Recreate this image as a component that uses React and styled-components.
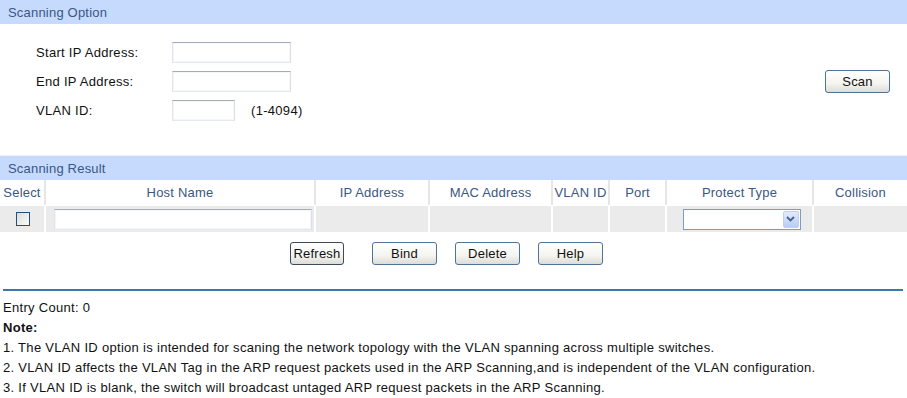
import React from "react";
import styled, { createGlobalStyle } from "styled-components";

const GlobalStyle = createGlobalStyle`
  body {
    margin: 0;
    background: #fff;
    font-family: "Liberation Sans", Arial, sans-serif;
    font-size: 13px;
    color: #000;
  }
`;

const columns = [
  { title: "Select", width: 46 },
  { title: "Host Name", width: 270 },
  { title: "IP Address", width: 114 },
  { title: "MAC Address", width: 123 },
  { title: "VLAN ID", width: 57 },
  { title: "Port", width: 57 },
  { title: "Protect Type", width: 147 },
  { title: "Collision", width: 93 },
];

const notes = [
  "1. The VLAN ID option is intended for scaning the network topology with the VLAN spanning across multiple switches.",
  "2. VLAN ID affects the VLAN Tag in the ARP request packets used in the ARP Scanning,and is independent of the VLAN configuration.",
  "3. If VLAN ID is blank, the switch will broadcast untaged ARP request packets in the ARP Scanning.",
];

const App = () => {
  return (
    <Page>
      <GlobalStyle />
      <SectionTitle>Scanning Option</SectionTitle>
      <OptionBody>
        <Form>
          <Label>Start IP Address:</Label>
          <Field>
            <TextInput $width={119} />
          </Field>
          <Label>End IP Address:</Label>
          <Field>
            <TextInput $width={119} />
          </Field>
          <Label>VLAN ID:</Label>
          <Field>
            <TextInput $width={63} />
            <Hint>(1-4094)</Hint>
          </Field>
        </Form>
        <ScanButton $width={65}>Scan</ScanButton>
      </OptionBody>

      <SectionTitle>Scanning Result</SectionTitle>
      <Table>
        {columns.map((c) => (
          <HeadCell key={c.title}>{c.title}</HeadCell>
        ))}
        <DataCell>
          <Checkbox />
        </DataCell>
        <DataCell $pad>
          <TextInput $width={258} />
        </DataCell>
        <DataCell />
        <DataCell />
        <DataCell />
        <DataCell />
        <DataCell>
          <Select>
            <SelectArrow>
              <svg width="9" height="6" viewBox="0 0 9 6">
                <path d="M1 1 L4.5 4.5 L8 1" fill="none" stroke="#4d6185" strokeWidth="1.8" />
              </svg>
            </SelectArrow>
          </Select>
        </DataCell>
        <DataCell />
      </Table>

      <ButtonRow>
        <Button $width={54} $dark $extra>Refresh</Button>
        <Button $width={65}>Bind</Button>
        <Button $width={65}>Delete</Button>
        <Button $width={65}>Help</Button>
      </ButtonRow>

      <Divider />

      <Info>
        <InfoLine>Entry Count: 0</InfoLine>
        <InfoLine $bold>Note:</InfoLine>
        {notes.map((n) => (
          <InfoLine key={n}>{n}</InfoLine>
        ))}
      </Info>
    </Page>
  );
};

const Page = styled.div`
  width: 907px;
`;

const SectionTitle = styled.div`
  height: 24px;
  line-height: 25px;
  padding-left: 8px;
  background: #c6dafe;
  color: #3a5783;
  font-size: 13px;
  letter-spacing: 0.2px;
`;

const OptionBody = styled.div`
  display: flex;
  align-items: flex-start;
  justify-content: space-between;
  padding: 18px 17px 0 36px;
  height: 113px;
  border-bottom: 1px solid #edf1f8;
`;

const Form = styled.div`
  display: grid;
  grid-template-columns: 136px auto;
  row-gap: 8px;
  align-items: center;
`;

const Label = styled.div`
  color: #111;
  font-size: 13px;
  letter-spacing: 0.3px;
  height: 21px;
  line-height: 21px;
`;

const Field = styled.div`
  display: flex;
  align-items: center;
  gap: 16px;
  height: 21px;
`;

const TextInput = styled.div`
  box-sizing: border-box;
  width: ${(p) => p.$width}px;
  height: 21px;
  border: 1px solid #a5acb5;
  border-color: #a5acb5 #dbdfe6 #e3e9ef #e2e3ea;
  box-shadow: inset 0 0 0 1px #f4f6f8;
  background: #fff;
`;

const Hint = styled.span`
  color: #111;
  font-size: 13px;
  letter-spacing: 0.3px;
`;

const Button = styled.div`
  box-sizing: border-box;
  width: ${(p) => p.$width}px;
  height: 23px;
  margin-right: ${(p) => (p.$extra ? "10px" : "0")};
  display: flex;
  align-items: center;
  justify-content: center;
  border: 1px solid ${(p) => (p.$dark ? "#3c4a5a" : "#4f7299")};
  border-radius: 3px;
  background: linear-gradient(#ffffff, #f4f4f0 60%, #dddcd6);
  font-size: 13px;
  letter-spacing: 0.2px;
  color: #111;
`;

const ScanButton = styled(Button)`
  margin-top: 28px;
`;

const Table = styled.div`
  display: grid;
  grid-template-columns: 46px 270px 114px 123px 57px 57px 147px 93px;
  grid-template-rows: 25px 26px;
  row-gap: 1px;
`;

const HeadCell = styled.div`
  box-sizing: border-box;
  display: flex;
  align-items: center;
  justify-content: center;
  border-right: 2px solid #e6e6e6;
  color: #3a5783;
  font-size: 13px;
  letter-spacing: 0.2px;
  white-space: nowrap;
  &:nth-child(8) {
    border-right: none;
  }
`;

const DataCell = styled.div`
  box-sizing: border-box;
  display: flex;
  align-items: center;
  justify-content: center;
  background: #ebebeb;
  border-right: 2px solid #fff;
  padding-left: ${(p) => (p.$pad ? "5px" : "0")};
  &:last-child {
    border-right: none;
  }
`;

const Checkbox = styled.div`
  box-sizing: border-box;
  width: 14px;
  height: 14px;
  margin-left: 2px;
  border: 1px solid #1c5180;
  background: linear-gradient(135deg, #dcdcd7, #fbfbfa);
`;

const Select = styled.div`
  box-sizing: border-box;
  width: 118px;
  height: 21px;
  margin-left: 4px;
  border: 1px solid #7f9db9;
  background: #fff;
  display: flex;
  justify-content: flex-end;
  padding: 1px;
`;

const SelectArrow = styled.div`
  width: 16px;
  display: flex;
  align-items: center;
  justify-content: center;
  border-radius: 2px;
  background: linear-gradient(#e1ebfd, #b7cdf5);
  border: 1px solid #bdd0f4;
  box-sizing: border-box;
`;

const ButtonRow = styled.div`
  display: flex;
  justify-content: center;
  gap: 18px;
  margin-top: 10px;
  padding-right: 14px;
`;

const Divider = styled.div`
  margin: 24px 4px 0 3px;
  height: 2px;
  background: #3c78ad;
`;

const Info = styled.div`
  padding: 7px 0 0 3px;
`;

const InfoLine = styled.div`
  height: 20px;
  line-height: 20px;
  font-size: 13px;
  letter-spacing: 0.3px;
  color: #111;
  font-weight: ${(p) => (p.$bold ? "bold" : "normal")};
  white-space: nowrap;
`;

export default App;
